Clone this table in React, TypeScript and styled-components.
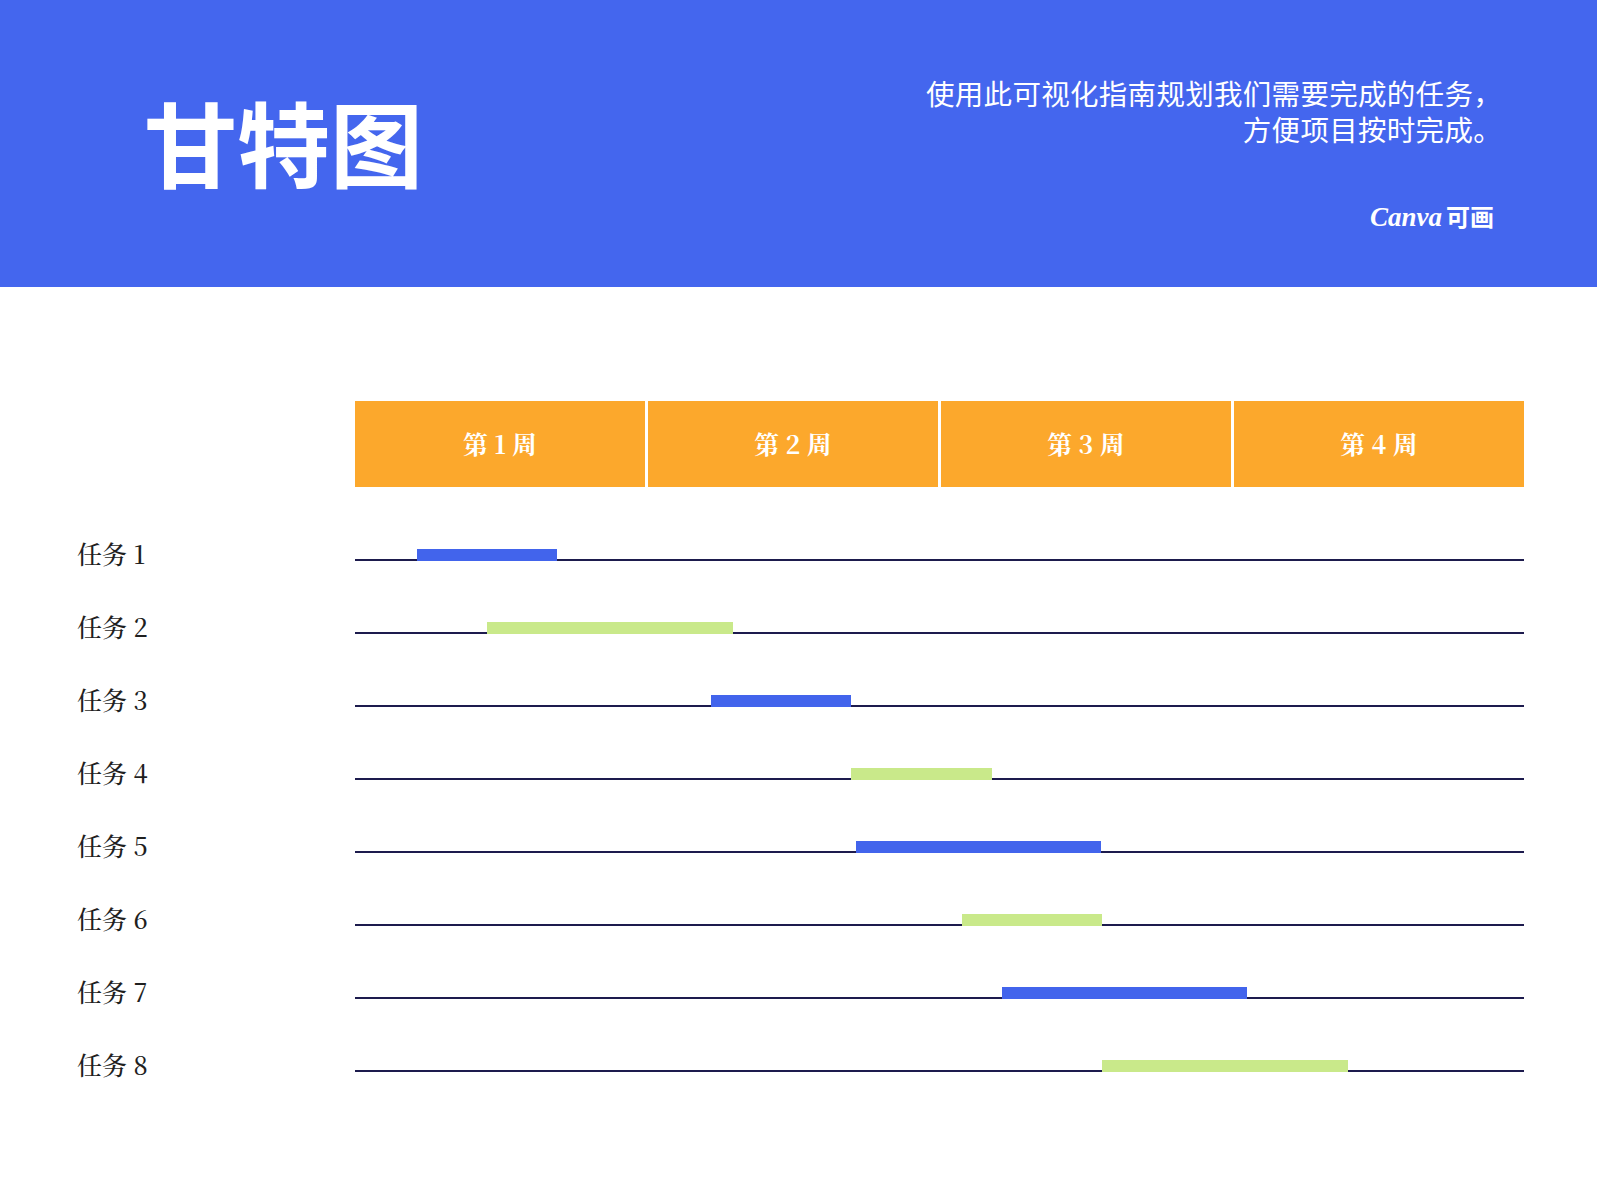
import React from 'react';
import styled, { createGlobalStyle } from 'styled-components';

const GlobalStyle = createGlobalStyle`
  html, body { margin: 0; padding: 0; background: #ffffff; }
  body { font-family: "Noto Sans CJK SC", "Noto Sans", sans-serif; }
  * { box-sizing: border-box; }
`;

const Page = styled.div`
  width: 1600px;
  min-height: 1200px;
  background: #ffffff;
`;

const Header = styled.header`
  height: 287px;
  margin-right: 3px;
  background: #4466ee;
  display: flex;
  justify-content: space-between;
  padding: 0 95px 0 144px;
`;

const Title = styled.h1`
  margin: 0 0 6px;
  align-self: center;
  color: #ffffff;
  font-family: "Noto Sans CJK SC", sans-serif;
  font-weight: 700;
  font-size: 93px;
  line-height: 1;
`;

const Side = styled.div`
  margin-top: 75px;
  display: flex;
  flex-direction: column;
  align-items: flex-end;
`;

const Subtitle = styled.p`
  margin: 0;
  color: #ffffff;
  font-family: "Noto Sans CJK SC", sans-serif;
  font-weight: 400;
  font-size: 28.5px;
  letter-spacing: 0.3px;
  line-height: 36px;
  text-align: right;
`;

const SubLine = styled.span`
  display: block;
  height: 36px;
`;

const Logo = styled.div`
  margin-top: 54px;
  margin-right: 8px;
  display: flex;
  align-items: baseline;
  gap: 4px;
  color: #ffffff;
  line-height: 30px;
`;

const LogoWord = styled.span`
  font-family: "Liberation Serif", "DejaVu Serif", serif;
  font-style: italic;
  font-weight: 700;
  font-size: 27px;
`;

const LogoCjk = styled.span`
  font-family: "Noto Sans CJK SC", sans-serif;
  font-weight: 700;
  font-size: 24px;
`;

const Chart = styled.section`
  padding: 114px 0 0 77px;
`;

const WeekRow = styled.div`
  display: grid;
  grid-template-columns: 278px 1169px;
  height: 86px;
`;

const WeekBar = styled.div`
  grid-column: 2;
  display: grid;
  grid-template-columns: repeat(4, 1fr);
  gap: 3px;
`;

const WeekCell = styled.div`
  background: #fca82c;
  display: flex;
  align-items: center;
  justify-content: center;
  padding-bottom: 3px;
  color: #ffffff;
  font-family: "Noto Serif CJK SC", "Liberation Serif", "Noto Sans CJK SC", serif;
  font-weight: 700;
  font-size: 25px;
  white-space: pre;
`;

const TaskList = styled.div`
  margin-top: 34px;
  display: flex;
  flex-direction: column;
`;

const TaskRow = styled.div`
  display: grid;
  grid-template-columns: 278px 1169px;
  height: 73px;
  align-items: center;
`;

const Label = styled.div`
  margin-bottom: 9px;
  color: #1f1f1f;
  font-family: "Noto Serif CJK SC", "Liberation Serif", "Noto Sans CJK SC", serif;
  font-weight: 500;
  font-size: 25px;
  line-height: 30px;
  white-space: pre;
`;

const Track = styled.div`
  height: 6px;
  display: flex;
  align-items: flex-end;
  background: linear-gradient(to top, #1d1b4d 0, #1d1b4d 2px, transparent 2px);
`;

const Bar = styled.div<{ $tone: 'blue' | 'green' }>`
  flex: none;
  height: 12px;
  background: ${(p) => (p.$tone === 'blue' ? '#4264ec' : '#c9e98a')};
`;

const weeks = ['第 1 周', '第 2 周', '第 3 周', '第 4 周'];

const tasks: { name: string; left: number; width: number; tone: 'blue' | 'green' }[] = [
  { name: '任务 1', left: 62, width: 140, tone: 'blue' },
  { name: '任务 2', left: 132, width: 246, tone: 'green' },
  { name: '任务 3', left: 356, width: 140, tone: 'blue' },
  { name: '任务 4', left: 496, width: 141, tone: 'green' },
  { name: '任务 5', left: 501, width: 245, tone: 'blue' },
  { name: '任务 6', left: 607, width: 140, tone: 'green' },
  { name: '任务 7', left: 647, width: 245, tone: 'blue' },
  { name: '任务 8', left: 747, width: 246, tone: 'green' },
];

export default function App() {
  return (
    <Page>
      <GlobalStyle />
      <Header>
        <Title>甘特图</Title>
        <Side>
          <Subtitle>
            <SubLine>使用此可视化指南规划我们需要完成的任务，</SubLine>
            <SubLine>方便项目按时完成。</SubLine>
          </Subtitle>
          <Logo>
            <LogoWord>Canva</LogoWord>
            <LogoCjk>可画</LogoCjk>
          </Logo>
        </Side>
      </Header>
      <Chart>
        <WeekRow>
          <WeekBar>
            {weeks.map((w) => (
              <WeekCell key={w}>{w}</WeekCell>
            ))}
          </WeekBar>
        </WeekRow>
        <TaskList>
          {tasks.map((t) => (
            <TaskRow key={t.name}>
              <Label>{t.name}</Label>
              <Track>
                <Bar $tone={t.tone} style={{ marginLeft: t.left, width: t.width }} />
              </Track>
            </TaskRow>
          ))}
        </TaskList>
      </Chart>
    </Page>
  );
}
